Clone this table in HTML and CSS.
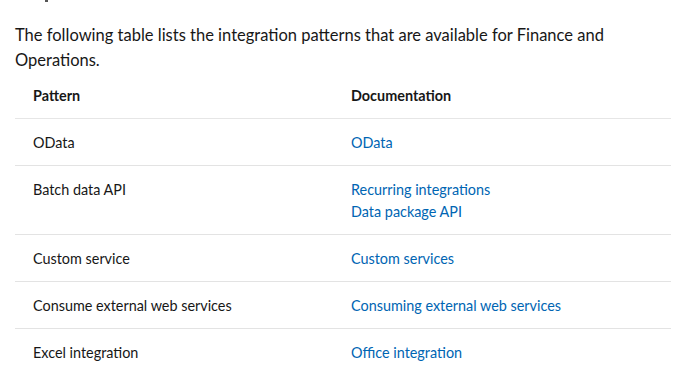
FILE: index.html
```html
<!DOCTYPE html>
<html lang="en">
<head>
    <meta charset="UTF-8">
    <meta name="viewport" content="width=device-width, initial-scale=1.0">
    <title>Integration patterns</title>
    <link rel="stylesheet" href="styles.css">
</head>
<body>
    <main class="content">
        <div class="cut"></div>
        <p class="intro">The following table lists the integration patterns that are available for Finance and Operations.</p>
        <table class="patterns">
            <thead>
                <tr>
                    <th>Pattern</th>
                    <th>Documentation</th>
                </tr>
            </thead>
            <tbody>
                <tr>
                    <td>OData</td>
                    <td><a href="#">OData</a></td>
                </tr>
                <tr>
                    <td>Batch data API</td>
                    <td><a href="#">Recurring integrations</a><br><a href="#">Data package API</a></td>
                </tr>
                <tr>
                    <td>Custom service</td>
                    <td><a href="#">Custom services</a></td>
                </tr>
                <tr>
                    <td>Consume external web services</td>
                    <td><a href="#">Consuming external web services</a></td>
                </tr>
                <tr>
                    <td>Excel integration</td>
                    <td><a href="#">Office integration</a></td>
                </tr>
            </tbody>
        </table>
    </main>
</body>
</html>
```
FILE: styles.css
```css
* {
    margin: 0;
    padding: 0;
    box-sizing: border-box;
}
body {
    background-color: white;
    color: #171717;
    font-family: 'Segoe UI', Lato, 'Open Sans', sans-serif;
}
a {
    color: #0065b3;
    text-decoration: none;
}
.content {
    width: 656px;
    margin-left: 15px;
}
.cut {
    width: 3px;
    height: 2px;
    margin-left: 30px;
    background-color: #555;
}
.intro {
    margin-top: 21px;
    font-size: 16.5px;
    line-height: 24.5px;
}
.patterns {
    width: 100%;
    border-collapse: collapse;
    font-size: 14.4px;
    line-height: 22px;
}
.patterns th {
    text-align: left;
    font-weight: 700;
    padding: 13px 18px 11px 18px;
    border-bottom: 1px solid #e6e6e6;
}
.patterns td {
    vertical-align: top;
    padding: 13px 18px 11px 18px;
    border-top: 1px solid #e3e3e3;
}
.patterns th:first-child,
.patterns td:first-child {
    width: 318px;
}
.patterns tbody tr:first-child td {
    border-top: none;
}
```
